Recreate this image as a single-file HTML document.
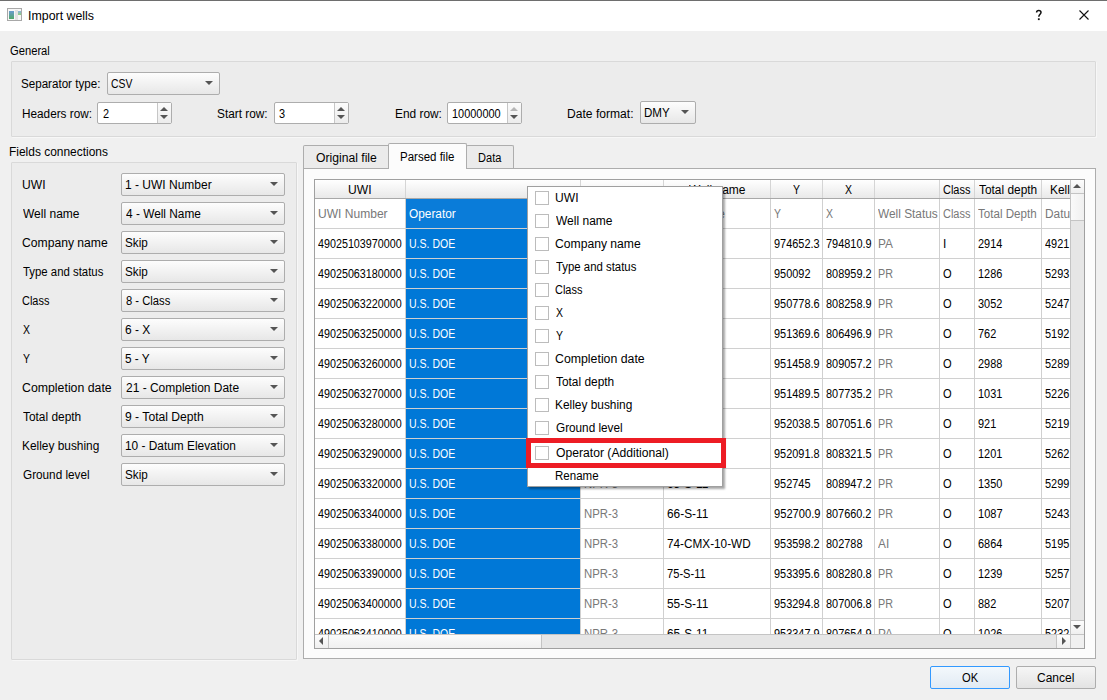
<!DOCTYPE html><html><head><meta charset="utf-8"><style>
*{margin:0;padding:0;box-sizing:border-box}
html,body{width:1107px;height:700px;overflow:hidden;background:#f0f0f0;font-family:"Liberation Sans",sans-serif;font-size:12.5px;color:#000}
div{position:absolute}
.t{line-height:14px;white-space:nowrap;transform-origin:0 0}
.g{color:#787878}
.w{color:#fff}
.grp{background:#ececec;border:1px solid #d9d9d9;border-radius:1px;box-shadow:1px 1px 0 #f7f7f7}
.cb{border:1px solid #adadad;border-radius:2px;background:linear-gradient(#fdfdfd,#e7e7e7)}
.arr{width:0;height:0;border-left:4px solid transparent;border-right:4px solid transparent;border-top:4px solid #555}
.sp{border:1px solid #adadad;border-radius:2px;background:#fff}
.spb{border-left:1px solid #c6c6c6;background:linear-gradient(#fbfbfb,#ececec)}
.up{width:0;height:0;border-left:4px solid transparent;border-right:4px solid transparent;border-bottom:4px solid #555}
.dn{width:0;height:0;border-left:4px solid transparent;border-right:4px solid transparent;border-top:4px solid #555}
.lf{width:0;height:0;border-top:4px solid transparent;border-bottom:4px solid transparent;border-right:4px solid #555}
.rt{width:0;height:0;border-top:4px solid transparent;border-bottom:4px solid transparent;border-left:4px solid #555}
.chk{border:1px solid #bcbcbc;background:#fff}
</style></head><body><div style="left:0px;top:0px;width:1107px;height:1px;background:#6e6e6e"></div>
<div style="left:0px;top:1px;width:1107px;height:30px;background:#fff"></div>
<div style="left:7px;top:8px;width:15px;height:13px;border:1px solid #a8a8a8;background:#f7f7f7"><div style="left:1px;top:2px;width:5px;height:8px;background:linear-gradient(#6a9bd0,#4fa868)"></div><div style="left:7px;top:1px;width:3px;height:10px;background:#e2e2e2"></div><div style="left:10px;top:2px;width:3px;height:4px;background:linear-gradient(#8ab3e0,#8fd07a)"></div></div>
<div class="t" style="left:27.61px;top:9px;transform:scaleX(0.9908);">Import wells</div>
<svg style="position:absolute;left:1034px;top:9px" width="10" height="13"><path d="M2.6 3.5C2.6 2.2 3.5 1.6 4.7 1.6C6.0 1.6 7.0 2.4 7.0 3.6C7.0 5.2 4.8 5.5 4.8 7.8" stroke="#111" stroke-width="1.5" fill="none"/><rect x="3.9" y="9.3" width="1.8" height="1.8" fill="#111"/></svg>
<svg style="position:absolute;left:1078px;top:9px" width="12" height="12"><path d="M1.5 1.5L10.5 10.5M10.5 1.5L1.5 10.5" stroke="#111" stroke-width="1.1"/></svg>
<div class="t" style="left:10.30px;top:44px;transform:scaleX(0.8955);">General</div>
<div class="grp" style="left:11px;top:61px;width:1085px;height:76px;"></div>
<div class="t" style="left:21.27px;top:77px;transform:scaleX(0.9286);">Separator type:</div>
<div class="cb" style="left:107px;top:72px;width:113px;height:23px;"></div><div class="t" style="left:111.37px;top:77px;transform:scaleX(0.8320);">CSV</div><div class="arr" style="left:205px;top:81px"></div>
<div class="t" style="left:21.56px;top:107px;transform:scaleX(0.9417);">Headers row:</div>
<div class="sp" style="left:97px;top:102px;width:75px;height:22px;"></div><div class="spb" style="left:157px;top:103px;width:14px;height:20px;"></div><div class="t" style="left:102.50px;top:107px;transform:scaleX(0.8741);">2</div><div class="up" style="left:160px;top:107px;border-bottom-color:#555"></div><div class="dn" style="left:160px;top:115px"></div>
<div class="t" style="left:217.45px;top:107px;transform:scaleX(0.9462);">Start row:</div>
<div class="sp" style="left:274px;top:102px;width:75px;height:22px;"></div><div class="spb" style="left:334px;top:103px;width:14px;height:20px;"></div><div class="t" style="left:278.63px;top:107px;transform:scaleX(0.8741);">3</div><div class="up" style="left:337px;top:107px;border-bottom-color:#555"></div><div class="dn" style="left:337px;top:115px"></div>
<div class="t" style="left:394.65px;top:107px;transform:scaleX(0.9511);">End row:</div>
<div class="sp" style="left:447px;top:102px;width:75px;height:22px;"></div><div class="spb" style="left:507px;top:103px;width:14px;height:20px;"></div><div class="t" style="left:451.83px;top:107px;transform:scaleX(0.8741);">10000000</div><div class="up" style="left:510px;top:107px;border-bottom-color:#b5b5b5"></div><div class="dn" style="left:510px;top:115px"></div>
<div class="t" style="left:567.43px;top:107px;transform:scaleX(0.9672);">Date format:</div>
<div class="cb" style="left:640px;top:101px;width:56px;height:23px;"></div><div class="t" style="left:644.47px;top:106px;transform:scaleX(0.9259);">DMY</div><div class="arr" style="left:681px;top:110px"></div>
<div class="t" style="left:9.34px;top:145px;transform:scaleX(0.9559);">Fields connections</div>
<div class="grp" style="left:11px;top:162px;width:286px;height:498px;"></div>
<div class="t" style="left:21.53px;top:178px;transform:scaleX(0.9682);">UWI</div>
<div class="cb" style="left:121px;top:173px;width:164px;height:23px;"></div><div class="t" style="left:125.24px;top:178px;transform:scaleX(0.9596);">1 - UWI Number</div><div class="arr" style="left:270px;top:182px"></div>
<div class="t" style="left:22.50px;top:207px;transform:scaleX(0.9603);">Well name</div>
<div class="cb" style="left:121px;top:202px;width:164px;height:23px;"></div><div class="t" style="left:126.20px;top:207px;transform:scaleX(0.9494);">4 - Well Name</div><div class="arr" style="left:270px;top:211px"></div>
<div class="t" style="left:21.53px;top:236px;transform:scaleX(0.9713);">Company name</div>
<div class="cb" style="left:121px;top:231px;width:164px;height:23px;"></div><div class="t" style="left:125.27px;top:236px;transform:scaleX(0.9348);">Skip</div><div class="arr" style="left:270px;top:240px"></div>
<div class="t" style="left:22.50px;top:265px;transform:scaleX(0.9102);">Type and status</div>
<div class="cb" style="left:121px;top:260px;width:164px;height:23px;"></div><div class="t" style="left:125.27px;top:265px;transform:scaleX(0.9348);">Skip</div><div class="arr" style="left:270px;top:269px"></div>
<div class="t" style="left:21.62px;top:294px;transform:scaleX(0.8767);">Class</div>
<div class="cb" style="left:121px;top:289px;width:164px;height:23px;"></div><div class="t" style="left:126.20px;top:294px;transform:scaleX(0.8980);">8 - Class</div><div class="arr" style="left:270px;top:298px"></div>
<div class="t" style="left:22.50px;top:323px;transform:scaleX(0.8375);">X</div>
<div class="cb" style="left:121px;top:318px;width:164px;height:23px;"></div><div class="t" style="left:125.24px;top:323px;transform:scaleX(0.9560);">6 - X</div><div class="arr" style="left:270px;top:327px"></div>
<div class="t" style="left:22.50px;top:352px;transform:scaleX(0.8375);">Y</div>
<div class="cb" style="left:121px;top:347px;width:164px;height:23px;"></div><div class="t" style="left:125.26px;top:352px;transform:scaleX(0.9440);">5 - Y</div><div class="arr" style="left:270px;top:356px"></div>
<div class="t" style="left:21.51px;top:381px;transform:scaleX(0.9856);">Completion date</div>
<div class="cb" style="left:121px;top:376px;width:164px;height:23px;"></div><div class="t" style="left:126.20px;top:381px;transform:scaleX(0.9576);">21 - Completion Date</div><div class="arr" style="left:270px;top:385px"></div>
<div class="t" style="left:22.50px;top:410px;transform:scaleX(0.9508);">Total depth</div>
<div class="cb" style="left:121px;top:405px;width:164px;height:23px;"></div><div class="t" style="left:125.23px;top:410px;transform:scaleX(0.9709);">9 - Total Depth</div><div class="arr" style="left:270px;top:414px"></div>
<div class="t" style="left:21.55px;top:439px;transform:scaleX(0.9512);">Kelley bushing</div>
<div class="cb" style="left:121px;top:434px;width:164px;height:23px;"></div><div class="t" style="left:125.25px;top:439px;transform:scaleX(0.9496);">10 - Datum Elevation</div><div class="arr" style="left:270px;top:443px"></div>
<div class="t" style="left:22.50px;top:468px;transform:scaleX(0.9400);">Ground level</div>
<div class="cb" style="left:121px;top:463px;width:164px;height:23px;"></div><div class="t" style="left:125.27px;top:468px;transform:scaleX(0.9348);">Skip</div><div class="arr" style="left:270px;top:472px"></div>
<div style="left:303px;top:168px;width:793px;height:491px;border:1px solid #adadad;background:#fcfcfc"></div>
<div style="left:303px;top:145px;width:87px;height:23px;border:1px solid #adadad;border-bottom:none;background:#ebebeb;border-radius:2px 2px 0 0"></div>
<div class="t" style="left:315.70px;top:151px;transform:scaleX(0.9726);">Original file</div>
<div style="left:466px;top:145px;width:48px;height:23px;border:1px solid #adadad;border-bottom:none;background:#ebebeb;border-radius:2px 2px 0 0"></div>
<div class="t" style="left:477.82px;top:151px;transform:scaleX(0.8846);">Data</div>
<div style="left:388px;top:143px;width:79px;height:26px;border:1px solid #adadad;border-bottom:none;background:#fcfcfc;border-radius:2px 2px 0 0"></div>
<div style="left:389px;top:168px;width:77px;height:2px;background:#fcfcfc"></div>
<div class="t" style="left:399.58px;top:150px;transform:scaleX(0.9207);">Parsed file</div>
<div style="left:314px;top:179px;width:771px;height:470px;border:1px solid #a0a0a0;background:#fff"></div>
<div style="left:315px;top:180px;width:756px;height:18px;background:linear-gradient(#ffffff,#e9e9e9)"></div>
<div style="left:315px;top:198px;width:756px;height:1px;background:#a8a8a8"></div>
<div class="t" style="left:348.38px;top:183px;transform:scaleX(0.9682);">UWI</div>
<div style="left:405px;top:180px;width:1px;height:18px;background:#d5d5d5"></div>
<div style="left:580px;top:180px;width:1px;height:18px;background:#d5d5d5"></div>
<div style="left:663px;top:180px;width:1px;height:18px;background:#d5d5d5"></div>
<div class="t" style="left:689.15px;top:183px;transform:scaleX(0.9603);">Well name</div>
<div style="left:770px;top:180px;width:1px;height:18px;background:#d5d5d5"></div>
<div class="t" style="left:793.15px;top:183px;transform:scaleX(0.8375);">Y</div>
<div style="left:822px;top:180px;width:1px;height:18px;background:#d5d5d5"></div>
<div class="t" style="left:845.15px;top:183px;transform:scaleX(0.8375);">X</div>
<div style="left:874px;top:180px;width:1px;height:18px;background:#d5d5d5"></div>
<div style="left:939px;top:180px;width:1px;height:18px;background:#d5d5d5"></div>
<div class="t" style="left:942.97px;top:183px;transform:scaleX(0.8767);">Class</div>
<div style="left:974px;top:180px;width:1px;height:18px;background:#d5d5d5"></div>
<div class="t" style="left:979.00px;top:183px;transform:scaleX(0.9508);">Total depth</div>
<div style="left:1041px;top:180px;width:1px;height:18px;background:#d5d5d5"></div>
<div style="left:1042px;top:180px;width:28px;height:18px;overflow:hidden"><div class="t" style="left:7.65px;top:3px;transform:scaleX(0.9512);">Kelley bushing</div></div>
<div style="left:0;top:0;width:1107px;height:634px;overflow:hidden"><div style="left:315px;top:199px;width:90px;height:29px;overflow:hidden"><div class="t g" style="left:2.50px;top:8px;transform:scaleX(0.9634);">UWI Number</div></div><div style="left:406px;top:199px;width:174px;height:29px;background:#0a7cd9"></div><div style="left:406px;top:199px;width:174px;height:29px;overflow:hidden"><div class="t w" style="left:2.50px;top:8px;transform:scaleX(0.9490);">Operator</div></div><div style="left:581px;top:199px;width:82px;height:29px;overflow:hidden"><div class="t g" style="left:2.50px;top:8px;transform:scaleX(0.9492);">Field Name</div></div><div style="left:664px;top:199px;width:106px;height:29px;overflow:hidden"><div class="t g" style="left:2.50px;top:8px;transform:scaleX(0.9492);">Well Name</div></div><div style="left:771px;top:199px;width:51px;height:29px;overflow:hidden"><div class="t g" style="left:2.50px;top:8px;transform:scaleX(0.8375);">Y</div></div><div style="left:823px;top:199px;width:51px;height:29px;overflow:hidden"><div class="t g" style="left:2.50px;top:8px;transform:scaleX(0.8375);">X</div></div><div style="left:875px;top:199px;width:64px;height:29px;overflow:hidden"><div class="t g" style="left:2.50px;top:8px;transform:scaleX(0.9492);">Well Status</div></div><div style="left:940px;top:199px;width:34px;height:29px;overflow:hidden"><div class="t g" style="left:2.50px;top:8px;transform:scaleX(0.8767);">Class</div></div><div style="left:975px;top:199px;width:66px;height:29px;overflow:hidden"><div class="t g" style="left:2.50px;top:8px;transform:scaleX(0.9270);">Total Depth</div></div><div style="left:1042px;top:199px;width:28px;height:29px;overflow:hidden"><div class="t g" style="left:2.50px;top:8px;transform:scaleX(0.9492);">Datum Elevation</div></div><div style="left:315px;top:228px;width:756px;height:1px;background:#d0d0d0"></div><div style="left:315px;top:229px;width:90px;height:29px;overflow:hidden"><div class="t" style="left:2.50px;top:8px;transform:scaleX(0.8598);">49025103970000</div></div><div style="left:406px;top:229px;width:174px;height:29px;background:#0078d7"></div><div style="left:406px;top:229px;width:174px;height:29px;overflow:hidden"><div class="t w" style="left:2.50px;top:8px;transform:scaleX(0.8426);">U.S. DOE</div></div><div style="left:581px;top:229px;width:82px;height:29px;overflow:hidden"><div class="t g" style="left:2.50px;top:8px;transform:scaleX(0.9111);">NPR-3</div></div><div style="left:664px;top:229px;width:106px;height:29px;overflow:hidden"><div class="t" style="left:2.50px;top:8px;transform:scaleX(0.9492);">53-S-3</div></div><div style="left:771px;top:229px;width:51px;height:29px;overflow:hidden"><div class="t" style="left:2.50px;top:8px;transform:scaleX(0.8741);">974652.3</div></div><div style="left:823px;top:229px;width:51px;height:29px;overflow:hidden"><div class="t" style="left:2.50px;top:8px;transform:scaleX(0.8741);">794810.9</div></div><div style="left:875px;top:229px;width:64px;height:29px;overflow:hidden"><div class="t g" style="left:2.50px;top:8px;transform:scaleX(0.9492);">PA</div></div><div style="left:940px;top:229px;width:34px;height:29px;overflow:hidden"><div class="t" style="left:2.50px;top:8px;transform:scaleX(0.9492);">I</div></div><div style="left:975px;top:229px;width:66px;height:29px;overflow:hidden"><div class="t" style="left:2.50px;top:8px;transform:scaleX(0.8741);">2914</div></div><div style="left:1042px;top:229px;width:28px;height:29px;overflow:hidden"><div class="t" style="left:2.50px;top:8px;transform:scaleX(0.8741);">4921</div></div><div style="left:315px;top:258px;width:756px;height:1px;background:#d0d0d0"></div><div style="left:315px;top:259px;width:90px;height:29px;overflow:hidden"><div class="t" style="left:2.50px;top:8px;transform:scaleX(0.8600);">49025063180000</div></div><div style="left:406px;top:259px;width:174px;height:29px;background:#0078d7"></div><div style="left:406px;top:259px;width:174px;height:29px;overflow:hidden"><div class="t w" style="left:2.50px;top:8px;transform:scaleX(0.8426);">U.S. DOE</div></div><div style="left:581px;top:259px;width:82px;height:29px;overflow:hidden"><div class="t g" style="left:2.50px;top:8px;transform:scaleX(0.9111);">NPR-3</div></div><div style="left:664px;top:259px;width:106px;height:29px;overflow:hidden"><div class="t" style="left:2.50px;top:8px;transform:scaleX(0.9492);">54-S-11</div></div><div style="left:771px;top:259px;width:51px;height:29px;overflow:hidden"><div class="t" style="left:2.50px;top:8px;transform:scaleX(0.8741);">950092</div></div><div style="left:823px;top:259px;width:51px;height:29px;overflow:hidden"><div class="t" style="left:2.50px;top:8px;transform:scaleX(0.8741);">808959.2</div></div><div style="left:875px;top:259px;width:64px;height:29px;overflow:hidden"><div class="t g" style="left:2.50px;top:8px;transform:scaleX(0.8625);">PR</div></div><div style="left:940px;top:259px;width:34px;height:29px;overflow:hidden"><div class="t" style="left:2.50px;top:8px;transform:scaleX(0.8889);">O</div></div><div style="left:975px;top:259px;width:66px;height:29px;overflow:hidden"><div class="t" style="left:2.50px;top:8px;transform:scaleX(0.8741);">1286</div></div><div style="left:1042px;top:259px;width:28px;height:29px;overflow:hidden"><div class="t" style="left:2.50px;top:8px;transform:scaleX(0.8741);">5293</div></div><div style="left:315px;top:288px;width:756px;height:1px;background:#d0d0d0"></div><div style="left:315px;top:289px;width:90px;height:29px;overflow:hidden"><div class="t" style="left:2.50px;top:8px;transform:scaleX(0.8600);">49025063220000</div></div><div style="left:406px;top:289px;width:174px;height:29px;background:#0078d7"></div><div style="left:406px;top:289px;width:174px;height:29px;overflow:hidden"><div class="t w" style="left:2.50px;top:8px;transform:scaleX(0.8426);">U.S. DOE</div></div><div style="left:581px;top:289px;width:82px;height:29px;overflow:hidden"><div class="t g" style="left:2.50px;top:8px;transform:scaleX(0.9111);">NPR-3</div></div><div style="left:664px;top:289px;width:106px;height:29px;overflow:hidden"><div class="t" style="left:2.50px;top:8px;transform:scaleX(0.9492);">55-S-11</div></div><div style="left:771px;top:289px;width:51px;height:29px;overflow:hidden"><div class="t" style="left:2.50px;top:8px;transform:scaleX(0.8741);">950778.6</div></div><div style="left:823px;top:289px;width:51px;height:29px;overflow:hidden"><div class="t" style="left:2.50px;top:8px;transform:scaleX(0.8741);">808258.9</div></div><div style="left:875px;top:289px;width:64px;height:29px;overflow:hidden"><div class="t g" style="left:2.50px;top:8px;transform:scaleX(0.8625);">PR</div></div><div style="left:940px;top:289px;width:34px;height:29px;overflow:hidden"><div class="t" style="left:2.50px;top:8px;transform:scaleX(0.8889);">O</div></div><div style="left:975px;top:289px;width:66px;height:29px;overflow:hidden"><div class="t" style="left:2.50px;top:8px;transform:scaleX(0.8741);">3052</div></div><div style="left:1042px;top:289px;width:28px;height:29px;overflow:hidden"><div class="t" style="left:2.50px;top:8px;transform:scaleX(0.8741);">5247</div></div><div style="left:315px;top:318px;width:756px;height:1px;background:#d0d0d0"></div><div style="left:315px;top:319px;width:90px;height:29px;overflow:hidden"><div class="t" style="left:2.50px;top:8px;transform:scaleX(0.8600);">49025063250000</div></div><div style="left:406px;top:319px;width:174px;height:29px;background:#0078d7"></div><div style="left:406px;top:319px;width:174px;height:29px;overflow:hidden"><div class="t w" style="left:2.50px;top:8px;transform:scaleX(0.8426);">U.S. DOE</div></div><div style="left:581px;top:319px;width:82px;height:29px;overflow:hidden"><div class="t g" style="left:2.50px;top:8px;transform:scaleX(0.9111);">NPR-3</div></div><div style="left:664px;top:319px;width:106px;height:29px;overflow:hidden"><div class="t" style="left:2.50px;top:8px;transform:scaleX(0.9492);">56-S-11</div></div><div style="left:771px;top:319px;width:51px;height:29px;overflow:hidden"><div class="t" style="left:2.50px;top:8px;transform:scaleX(0.8741);">951369.6</div></div><div style="left:823px;top:319px;width:51px;height:29px;overflow:hidden"><div class="t" style="left:2.50px;top:8px;transform:scaleX(0.8741);">806496.9</div></div><div style="left:875px;top:319px;width:64px;height:29px;overflow:hidden"><div class="t g" style="left:2.50px;top:8px;transform:scaleX(0.8625);">PR</div></div><div style="left:940px;top:319px;width:34px;height:29px;overflow:hidden"><div class="t" style="left:2.50px;top:8px;transform:scaleX(0.8889);">O</div></div><div style="left:975px;top:319px;width:66px;height:29px;overflow:hidden"><div class="t" style="left:2.50px;top:8px;transform:scaleX(0.8741);">762</div></div><div style="left:1042px;top:319px;width:28px;height:29px;overflow:hidden"><div class="t" style="left:2.50px;top:8px;transform:scaleX(0.8741);">5192</div></div><div style="left:315px;top:348px;width:756px;height:1px;background:#d0d0d0"></div><div style="left:315px;top:349px;width:90px;height:29px;overflow:hidden"><div class="t" style="left:2.50px;top:8px;transform:scaleX(0.8600);">49025063260000</div></div><div style="left:406px;top:349px;width:174px;height:29px;background:#0078d7"></div><div style="left:406px;top:349px;width:174px;height:29px;overflow:hidden"><div class="t w" style="left:2.50px;top:8px;transform:scaleX(0.8426);">U.S. DOE</div></div><div style="left:581px;top:349px;width:82px;height:29px;overflow:hidden"><div class="t g" style="left:2.50px;top:8px;transform:scaleX(0.9111);">NPR-3</div></div><div style="left:664px;top:349px;width:106px;height:29px;overflow:hidden"><div class="t" style="left:2.50px;top:8px;transform:scaleX(0.9492);">57-S-11</div></div><div style="left:771px;top:349px;width:51px;height:29px;overflow:hidden"><div class="t" style="left:2.50px;top:8px;transform:scaleX(0.8741);">951458.9</div></div><div style="left:823px;top:349px;width:51px;height:29px;overflow:hidden"><div class="t" style="left:2.50px;top:8px;transform:scaleX(0.8741);">809057.2</div></div><div style="left:875px;top:349px;width:64px;height:29px;overflow:hidden"><div class="t g" style="left:2.50px;top:8px;transform:scaleX(0.8625);">PR</div></div><div style="left:940px;top:349px;width:34px;height:29px;overflow:hidden"><div class="t" style="left:2.50px;top:8px;transform:scaleX(0.8889);">O</div></div><div style="left:975px;top:349px;width:66px;height:29px;overflow:hidden"><div class="t" style="left:2.50px;top:8px;transform:scaleX(0.8741);">2988</div></div><div style="left:1042px;top:349px;width:28px;height:29px;overflow:hidden"><div class="t" style="left:2.50px;top:8px;transform:scaleX(0.8741);">5289</div></div><div style="left:315px;top:378px;width:756px;height:1px;background:#d0d0d0"></div><div style="left:315px;top:379px;width:90px;height:29px;overflow:hidden"><div class="t" style="left:2.50px;top:8px;transform:scaleX(0.8600);">49025063270000</div></div><div style="left:406px;top:379px;width:174px;height:29px;background:#0078d7"></div><div style="left:406px;top:379px;width:174px;height:29px;overflow:hidden"><div class="t w" style="left:2.50px;top:8px;transform:scaleX(0.8426);">U.S. DOE</div></div><div style="left:581px;top:379px;width:82px;height:29px;overflow:hidden"><div class="t g" style="left:2.50px;top:8px;transform:scaleX(0.9111);">NPR-3</div></div><div style="left:664px;top:379px;width:106px;height:29px;overflow:hidden"><div class="t" style="left:2.50px;top:8px;transform:scaleX(0.9492);">58-S-11</div></div><div style="left:771px;top:379px;width:51px;height:29px;overflow:hidden"><div class="t" style="left:2.50px;top:8px;transform:scaleX(0.8741);">951489.5</div></div><div style="left:823px;top:379px;width:51px;height:29px;overflow:hidden"><div class="t" style="left:2.50px;top:8px;transform:scaleX(0.8741);">807735.2</div></div><div style="left:875px;top:379px;width:64px;height:29px;overflow:hidden"><div class="t g" style="left:2.50px;top:8px;transform:scaleX(0.8625);">PR</div></div><div style="left:940px;top:379px;width:34px;height:29px;overflow:hidden"><div class="t" style="left:2.50px;top:8px;transform:scaleX(0.8889);">O</div></div><div style="left:975px;top:379px;width:66px;height:29px;overflow:hidden"><div class="t" style="left:2.50px;top:8px;transform:scaleX(0.8741);">1031</div></div><div style="left:1042px;top:379px;width:28px;height:29px;overflow:hidden"><div class="t" style="left:2.50px;top:8px;transform:scaleX(0.8741);">5226</div></div><div style="left:315px;top:408px;width:756px;height:1px;background:#d0d0d0"></div><div style="left:315px;top:409px;width:90px;height:29px;overflow:hidden"><div class="t" style="left:2.50px;top:8px;transform:scaleX(0.8600);">49025063280000</div></div><div style="left:406px;top:409px;width:174px;height:29px;background:#0078d7"></div><div style="left:406px;top:409px;width:174px;height:29px;overflow:hidden"><div class="t w" style="left:2.50px;top:8px;transform:scaleX(0.8426);">U.S. DOE</div></div><div style="left:581px;top:409px;width:82px;height:29px;overflow:hidden"><div class="t g" style="left:2.50px;top:8px;transform:scaleX(0.9111);">NPR-3</div></div><div style="left:664px;top:409px;width:106px;height:29px;overflow:hidden"><div class="t" style="left:2.50px;top:8px;transform:scaleX(0.9492);">61-S-11</div></div><div style="left:771px;top:409px;width:51px;height:29px;overflow:hidden"><div class="t" style="left:2.50px;top:8px;transform:scaleX(0.8741);">952038.5</div></div><div style="left:823px;top:409px;width:51px;height:29px;overflow:hidden"><div class="t" style="left:2.50px;top:8px;transform:scaleX(0.8741);">807051.6</div></div><div style="left:875px;top:409px;width:64px;height:29px;overflow:hidden"><div class="t g" style="left:2.50px;top:8px;transform:scaleX(0.8625);">PR</div></div><div style="left:940px;top:409px;width:34px;height:29px;overflow:hidden"><div class="t" style="left:2.50px;top:8px;transform:scaleX(0.8889);">O</div></div><div style="left:975px;top:409px;width:66px;height:29px;overflow:hidden"><div class="t" style="left:2.50px;top:8px;transform:scaleX(0.8741);">921</div></div><div style="left:1042px;top:409px;width:28px;height:29px;overflow:hidden"><div class="t" style="left:2.50px;top:8px;transform:scaleX(0.8741);">5219</div></div><div style="left:315px;top:438px;width:756px;height:1px;background:#d0d0d0"></div><div style="left:315px;top:439px;width:90px;height:29px;overflow:hidden"><div class="t" style="left:2.50px;top:8px;transform:scaleX(0.8600);">49025063290000</div></div><div style="left:406px;top:439px;width:174px;height:29px;background:#0078d7"></div><div style="left:406px;top:439px;width:174px;height:29px;overflow:hidden"><div class="t w" style="left:2.50px;top:8px;transform:scaleX(0.8426);">U.S. DOE</div></div><div style="left:581px;top:439px;width:82px;height:29px;overflow:hidden"><div class="t g" style="left:2.50px;top:8px;transform:scaleX(0.9111);">NPR-3</div></div><div style="left:664px;top:439px;width:106px;height:29px;overflow:hidden"><div class="t" style="left:2.50px;top:8px;transform:scaleX(0.9492);">62-S-11</div></div><div style="left:771px;top:439px;width:51px;height:29px;overflow:hidden"><div class="t" style="left:2.50px;top:8px;transform:scaleX(0.8741);">952091.8</div></div><div style="left:823px;top:439px;width:51px;height:29px;overflow:hidden"><div class="t" style="left:2.50px;top:8px;transform:scaleX(0.8741);">808321.5</div></div><div style="left:875px;top:439px;width:64px;height:29px;overflow:hidden"><div class="t g" style="left:2.50px;top:8px;transform:scaleX(0.8625);">PR</div></div><div style="left:940px;top:439px;width:34px;height:29px;overflow:hidden"><div class="t" style="left:2.50px;top:8px;transform:scaleX(0.8889);">O</div></div><div style="left:975px;top:439px;width:66px;height:29px;overflow:hidden"><div class="t" style="left:2.50px;top:8px;transform:scaleX(0.8741);">1201</div></div><div style="left:1042px;top:439px;width:28px;height:29px;overflow:hidden"><div class="t" style="left:2.50px;top:8px;transform:scaleX(0.8741);">5262</div></div><div style="left:315px;top:468px;width:756px;height:1px;background:#d0d0d0"></div><div style="left:315px;top:469px;width:90px;height:29px;overflow:hidden"><div class="t" style="left:2.50px;top:8px;transform:scaleX(0.8600);">49025063320000</div></div><div style="left:406px;top:469px;width:174px;height:29px;background:#0078d7"></div><div style="left:406px;top:469px;width:174px;height:29px;overflow:hidden"><div class="t w" style="left:2.50px;top:8px;transform:scaleX(0.8426);">U.S. DOE</div></div><div style="left:581px;top:469px;width:82px;height:29px;overflow:hidden"><div class="t g" style="left:2.50px;top:8px;transform:scaleX(0.9111);">NPR-3</div></div><div style="left:664px;top:469px;width:106px;height:29px;overflow:hidden"><div class="t" style="left:2.50px;top:8px;transform:scaleX(0.9492);">65-S-11</div></div><div style="left:771px;top:469px;width:51px;height:29px;overflow:hidden"><div class="t" style="left:2.50px;top:8px;transform:scaleX(0.8741);">952745</div></div><div style="left:823px;top:469px;width:51px;height:29px;overflow:hidden"><div class="t" style="left:2.50px;top:8px;transform:scaleX(0.8741);">808947.2</div></div><div style="left:875px;top:469px;width:64px;height:29px;overflow:hidden"><div class="t g" style="left:2.50px;top:8px;transform:scaleX(0.8625);">PR</div></div><div style="left:940px;top:469px;width:34px;height:29px;overflow:hidden"><div class="t" style="left:2.50px;top:8px;transform:scaleX(0.8889);">O</div></div><div style="left:975px;top:469px;width:66px;height:29px;overflow:hidden"><div class="t" style="left:2.50px;top:8px;transform:scaleX(0.8741);">1350</div></div><div style="left:1042px;top:469px;width:28px;height:29px;overflow:hidden"><div class="t" style="left:2.50px;top:8px;transform:scaleX(0.8741);">5299</div></div><div style="left:315px;top:498px;width:756px;height:1px;background:#d0d0d0"></div><div style="left:315px;top:499px;width:90px;height:29px;overflow:hidden"><div class="t" style="left:2.50px;top:8px;transform:scaleX(0.8600);">49025063340000</div></div><div style="left:406px;top:499px;width:174px;height:29px;background:#0078d7"></div><div style="left:406px;top:499px;width:174px;height:29px;overflow:hidden"><div class="t w" style="left:2.50px;top:8px;transform:scaleX(0.8426);">U.S. DOE</div></div><div style="left:581px;top:499px;width:82px;height:29px;overflow:hidden"><div class="t g" style="left:2.50px;top:8px;transform:scaleX(0.9111);">NPR-3</div></div><div style="left:664px;top:499px;width:106px;height:29px;overflow:hidden"><div class="t" style="left:2.50px;top:8px;transform:scaleX(0.9492);">66-S-11</div></div><div style="left:771px;top:499px;width:51px;height:29px;overflow:hidden"><div class="t" style="left:2.50px;top:8px;transform:scaleX(0.8902);">952700.9</div></div><div style="left:823px;top:499px;width:51px;height:29px;overflow:hidden"><div class="t" style="left:2.50px;top:8px;transform:scaleX(0.8712);">807660.2</div></div><div style="left:875px;top:499px;width:64px;height:29px;overflow:hidden"><div class="t g" style="left:2.50px;top:8px;transform:scaleX(0.8625);">PR</div></div><div style="left:940px;top:499px;width:34px;height:29px;overflow:hidden"><div class="t" style="left:2.50px;top:8px;transform:scaleX(0.8889);">O</div></div><div style="left:975px;top:499px;width:66px;height:29px;overflow:hidden"><div class="t" style="left:2.50px;top:8px;transform:scaleX(0.8846);">1087</div></div><div style="left:1042px;top:499px;width:28px;height:29px;overflow:hidden"><div class="t" style="left:2.50px;top:8px;transform:scaleX(0.8741);">5243</div></div><div style="left:315px;top:528px;width:756px;height:1px;background:#d0d0d0"></div><div style="left:315px;top:529px;width:90px;height:29px;overflow:hidden"><div class="t" style="left:2.50px;top:8px;transform:scaleX(0.8600);">49025063380000</div></div><div style="left:406px;top:529px;width:174px;height:29px;background:#0078d7"></div><div style="left:406px;top:529px;width:174px;height:29px;overflow:hidden"><div class="t w" style="left:2.50px;top:8px;transform:scaleX(0.8426);">U.S. DOE</div></div><div style="left:581px;top:529px;width:82px;height:29px;overflow:hidden"><div class="t g" style="left:2.50px;top:8px;transform:scaleX(0.9111);">NPR-3</div></div><div style="left:664px;top:529px;width:106px;height:29px;overflow:hidden"><div class="t" style="left:2.50px;top:8px;transform:scaleX(0.9409);">74-CMX-10-WD</div></div><div style="left:771px;top:529px;width:51px;height:29px;overflow:hidden"><div class="t" style="left:2.50px;top:8px;transform:scaleX(0.8741);">953598.2</div></div><div style="left:823px;top:529px;width:51px;height:29px;overflow:hidden"><div class="t" style="left:2.50px;top:8px;transform:scaleX(0.8741);">802788</div></div><div style="left:875px;top:529px;width:64px;height:29px;overflow:hidden"><div class="t g" style="left:2.50px;top:8px;transform:scaleX(0.9492);">AI</div></div><div style="left:940px;top:529px;width:34px;height:29px;overflow:hidden"><div class="t" style="left:2.50px;top:8px;transform:scaleX(0.8889);">O</div></div><div style="left:975px;top:529px;width:66px;height:29px;overflow:hidden"><div class="t" style="left:2.50px;top:8px;transform:scaleX(0.8741);">6864</div></div><div style="left:1042px;top:529px;width:28px;height:29px;overflow:hidden"><div class="t" style="left:2.50px;top:8px;transform:scaleX(0.8741);">5195</div></div><div style="left:315px;top:558px;width:756px;height:1px;background:#d0d0d0"></div><div style="left:315px;top:559px;width:90px;height:29px;overflow:hidden"><div class="t" style="left:2.50px;top:8px;transform:scaleX(0.8600);">49025063390000</div></div><div style="left:406px;top:559px;width:174px;height:29px;background:#0078d7"></div><div style="left:406px;top:559px;width:174px;height:29px;overflow:hidden"><div class="t w" style="left:2.50px;top:8px;transform:scaleX(0.8426);">U.S. DOE</div></div><div style="left:581px;top:559px;width:82px;height:29px;overflow:hidden"><div class="t g" style="left:2.50px;top:8px;transform:scaleX(0.9111);">NPR-3</div></div><div style="left:664px;top:559px;width:106px;height:29px;overflow:hidden"><div class="t" style="left:2.50px;top:8px;transform:scaleX(0.8907);">75-S-11</div></div><div style="left:771px;top:559px;width:51px;height:29px;overflow:hidden"><div class="t" style="left:2.50px;top:8px;transform:scaleX(0.8741);">953395.6</div></div><div style="left:823px;top:559px;width:51px;height:29px;overflow:hidden"><div class="t" style="left:2.50px;top:8px;transform:scaleX(0.8741);">808280.8</div></div><div style="left:875px;top:559px;width:64px;height:29px;overflow:hidden"><div class="t g" style="left:2.50px;top:8px;transform:scaleX(0.8625);">PR</div></div><div style="left:940px;top:559px;width:34px;height:29px;overflow:hidden"><div class="t" style="left:2.50px;top:8px;transform:scaleX(0.8889);">O</div></div><div style="left:975px;top:559px;width:66px;height:29px;overflow:hidden"><div class="t" style="left:2.50px;top:8px;transform:scaleX(0.8741);">1239</div></div><div style="left:1042px;top:559px;width:28px;height:29px;overflow:hidden"><div class="t" style="left:2.50px;top:8px;transform:scaleX(0.8741);">5257</div></div><div style="left:315px;top:588px;width:756px;height:1px;background:#d0d0d0"></div><div style="left:315px;top:589px;width:90px;height:29px;overflow:hidden"><div class="t" style="left:2.50px;top:8px;transform:scaleX(0.8600);">49025063400000</div></div><div style="left:406px;top:589px;width:174px;height:29px;background:#0078d7"></div><div style="left:406px;top:589px;width:174px;height:29px;overflow:hidden"><div class="t w" style="left:2.50px;top:8px;transform:scaleX(0.8426);">U.S. DOE</div></div><div style="left:581px;top:589px;width:82px;height:29px;overflow:hidden"><div class="t g" style="left:2.50px;top:8px;transform:scaleX(0.9111);">NPR-3</div></div><div style="left:664px;top:589px;width:106px;height:29px;overflow:hidden"><div class="t" style="left:2.50px;top:8px;transform:scaleX(0.9492);">55-S-11</div></div><div style="left:771px;top:589px;width:51px;height:29px;overflow:hidden"><div class="t" style="left:2.50px;top:8px;transform:scaleX(0.8741);">953294.8</div></div><div style="left:823px;top:589px;width:51px;height:29px;overflow:hidden"><div class="t" style="left:2.50px;top:8px;transform:scaleX(0.8741);">807006.8</div></div><div style="left:875px;top:589px;width:64px;height:29px;overflow:hidden"><div class="t g" style="left:2.50px;top:8px;transform:scaleX(0.8625);">PR</div></div><div style="left:940px;top:589px;width:34px;height:29px;overflow:hidden"><div class="t" style="left:2.50px;top:8px;transform:scaleX(0.8889);">O</div></div><div style="left:975px;top:589px;width:66px;height:29px;overflow:hidden"><div class="t" style="left:2.50px;top:8px;transform:scaleX(0.8741);">882</div></div><div style="left:1042px;top:589px;width:28px;height:29px;overflow:hidden"><div class="t" style="left:2.50px;top:8px;transform:scaleX(0.8741);">5207</div></div><div style="left:315px;top:618px;width:756px;height:1px;background:#d0d0d0"></div><div style="left:315px;top:619px;width:90px;height:29px;overflow:hidden"><div class="t" style="left:2.50px;top:8px;transform:scaleX(0.8600);">49025063410000</div></div><div style="left:406px;top:619px;width:174px;height:29px;background:#0078d7"></div><div style="left:406px;top:619px;width:174px;height:29px;overflow:hidden"><div class="t w" style="left:2.50px;top:8px;transform:scaleX(0.8426);">U.S. DOE</div></div><div style="left:581px;top:619px;width:82px;height:29px;overflow:hidden"><div class="t g" style="left:2.50px;top:8px;transform:scaleX(0.9111);">NPR-3</div></div><div style="left:664px;top:619px;width:106px;height:29px;overflow:hidden"><div class="t" style="left:2.50px;top:8px;transform:scaleX(0.9492);">65-S-11</div></div><div style="left:771px;top:619px;width:51px;height:29px;overflow:hidden"><div class="t" style="left:2.50px;top:8px;transform:scaleX(0.8741);">953347.9</div></div><div style="left:823px;top:619px;width:51px;height:29px;overflow:hidden"><div class="t" style="left:2.50px;top:8px;transform:scaleX(0.8741);">807654.9</div></div><div style="left:875px;top:619px;width:64px;height:29px;overflow:hidden"><div class="t g" style="left:2.50px;top:8px;transform:scaleX(0.9492);">PA</div></div><div style="left:940px;top:619px;width:34px;height:29px;overflow:hidden"><div class="t" style="left:2.50px;top:8px;transform:scaleX(0.8889);">O</div></div><div style="left:975px;top:619px;width:66px;height:29px;overflow:hidden"><div class="t" style="left:2.50px;top:8px;transform:scaleX(0.8741);">1026</div></div><div style="left:1042px;top:619px;width:28px;height:29px;overflow:hidden"><div class="t" style="left:2.50px;top:8px;transform:scaleX(0.8741);">5232</div></div><div style="left:315px;top:648px;width:756px;height:1px;background:#d0d0d0"></div><div style="left:405px;top:199px;width:1px;height:435px;background:#d0d0d0"></div><div style="left:580px;top:199px;width:1px;height:435px;background:#d0d0d0"></div><div style="left:663px;top:199px;width:1px;height:435px;background:#d0d0d0"></div><div style="left:770px;top:199px;width:1px;height:435px;background:#d0d0d0"></div><div style="left:822px;top:199px;width:1px;height:435px;background:#d0d0d0"></div><div style="left:874px;top:199px;width:1px;height:435px;background:#d0d0d0"></div><div style="left:939px;top:199px;width:1px;height:435px;background:#d0d0d0"></div><div style="left:974px;top:199px;width:1px;height:435px;background:#d0d0d0"></div><div style="left:1041px;top:199px;width:1px;height:435px;background:#d0d0d0"></div></div>
<div style="left:1070px;top:180px;width:1px;height:454px;background:#c4c4c4"></div>
<div style="left:1071px;top:180px;width:13px;height:454px;background:#e6e6e6"></div>
<div style="left:1071px;top:180px;width:13px;height:14px;background:linear-gradient(#fdfdfd,#efefef);border-bottom:1px solid #c4c4c4"></div>
<div class="up" style="left:1073px;top:184px"></div>
<div style="left:1071px;top:194px;width:13px;height:27px;background:linear-gradient(90deg,#fafafa,#f0f0f0);border-bottom:1px solid #c4c4c4"></div>
<div style="left:1071px;top:620px;width:13px;height:14px;background:linear-gradient(#fdfdfd,#efefef);border-top:1px solid #c4c4c4"></div>
<div class="dn" style="left:1073px;top:625px"></div>
<div style="left:315px;top:634px;width:769px;height:1px;background:#c4c4c4"></div>
<div style="left:315px;top:635px;width:756px;height:13px;background:#e6e6e6"></div>
<div style="left:315px;top:635px;width:14px;height:13px;background:linear-gradient(#fdfdfd,#efefef);border-right:1px solid #c4c4c4"></div>
<div class="lf" style="left:319px;top:637px"></div>
<div style="left:329px;top:635px;width:213px;height:13px;background:linear-gradient(#fbfbfb,#f0f0f0);border-right:1px solid #c4c4c4"></div>
<div style="left:1056px;top:635px;width:15px;height:13px;background:linear-gradient(#fdfdfd,#efefef);border-left:1px solid #c4c4c4"></div>
<div class="rt" style="left:1062px;top:637px"></div>
<div style="left:1070px;top:634px;width:1px;height:14px;background:#c4c4c4"></div>
<div style="left:1071px;top:635px;width:13px;height:13px;background:#f0f0f0"></div>
<div style="left:527px;top:186px;width:196px;height:301px;border:1px solid #a0a0a0;background:#fff;box-shadow:2px 2px 2px rgba(0,0,0,0.35)"></div>
<div class="chk" style="left:535px;top:191px;width:14px;height:14px;"></div>
<div class="t" style="left:554.73px;top:191px;transform:scaleX(0.9682);">UWI</div>
<div class="chk" style="left:535px;top:214px;width:14px;height:14px;"></div>
<div class="t" style="left:555.70px;top:214px;transform:scaleX(0.9603);">Well name</div>
<div class="chk" style="left:535px;top:237px;width:14px;height:14px;"></div>
<div class="t" style="left:554.73px;top:237px;transform:scaleX(0.9713);">Company name</div>
<div class="chk" style="left:535px;top:260px;width:14px;height:14px;"></div>
<div class="t" style="left:555.70px;top:260px;transform:scaleX(0.9102);">Type and status</div>
<div class="chk" style="left:535px;top:283px;width:14px;height:14px;"></div>
<div class="t" style="left:554.82px;top:283px;transform:scaleX(0.8767);">Class</div>
<div class="chk" style="left:535px;top:306px;width:14px;height:14px;"></div>
<div class="t" style="left:555.70px;top:306px;transform:scaleX(0.8375);">X</div>
<div class="chk" style="left:535px;top:329px;width:14px;height:14px;"></div>
<div class="t" style="left:555.70px;top:329px;transform:scaleX(0.8375);">Y</div>
<div class="chk" style="left:535px;top:352px;width:14px;height:14px;"></div>
<div class="t" style="left:554.71px;top:352px;transform:scaleX(0.9856);">Completion date</div>
<div class="chk" style="left:535px;top:375px;width:14px;height:14px;"></div>
<div class="t" style="left:555.70px;top:375px;transform:scaleX(0.9508);">Total depth</div>
<div class="chk" style="left:535px;top:398px;width:14px;height:14px;"></div>
<div class="t" style="left:554.75px;top:398px;transform:scaleX(0.9512);">Kelley bushing</div>
<div class="chk" style="left:535px;top:421px;width:14px;height:14px;"></div>
<div class="t" style="left:555.70px;top:421px;transform:scaleX(0.9400);">Ground level</div>
<div class="chk" style="left:535px;top:446px;width:14px;height:14px;"></div>
<div class="t" style="left:555.70px;top:446px;transform:scaleX(0.9722);">Operator (Additional)</div>
<div class="t" style="left:554.78px;top:469px;transform:scaleX(0.9217);">Rename</div>
<div style="left:526px;top:438px;width:200px;height:30px;border:5px solid #ed1c24"></div>
<div style="left:930px;top:666px;width:80px;height:23px;border:1px solid #3399ff;border-radius:2px;background:linear-gradient(#f3f8fc,#e1eaf3)"></div>
<div class="t" style="left:962.20px;top:671px;transform:scaleX(0.8944);">OK</div>
<div style="left:1016px;top:666px;width:80px;height:23px;border:1px solid #adadad;border-radius:2px;background:linear-gradient(#f6f6f6,#e3e3e3)"></div>
<div class="t" style="left:1037.24px;top:671px;transform:scaleX(0.9595);">Cancel</div></body></html>
